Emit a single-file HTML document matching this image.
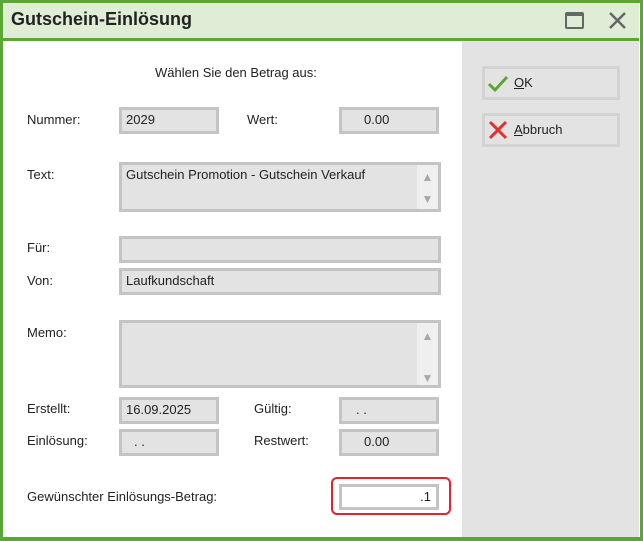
<!DOCTYPE html>
<html><head><meta charset="utf-8"><style>
*{margin:0;padding:0;box-sizing:border-box}
body{width:643px;height:541px;position:relative;overflow:hidden;background:#fff;font-family:"Liberation Sans",sans-serif;font-size:13px;color:#222}
.a{position:absolute}
.f{position:absolute;background:#e3e3e3;border:3px solid #c4c4c4;padding:2px 4px;font-size:13px;line-height:16px}
.l{position:absolute;font-size:13px}
.sb{position:absolute;right:0;top:0;bottom:0;width:21px;background:#efefef;color:#a8a8a8;font-size:12px;text-align:center;line-height:12px}
.btn{position:absolute;left:482px;width:138px;height:34px;border:3px solid #d3d3d3;background:#e3e3e3;font-size:13px}
</style></head><body>
<div class="a" style="left:0;top:0;width:643px;height:541px;border:3px solid #5ba733;border-bottom-width:4px"></div>
<div class="a" style="left:3px;top:3px;width:636px;height:35px;background:#dfedd6"></div>
<div class="a" style="left:3px;top:38px;width:636px;height:3px;background:#5ba733"></div>
<div class="a" style="left:11px;top:9px;font-size:18px;font-weight:bold;color:#222">Gutschein-Einlösung</div>
<div class="a" style="left:565px;top:12px;width:19px;height:17px;border:2px solid #666;border-top-width:4px;border-radius:2px"></div>
<svg class="a" style="left:608px;top:11px" width="19" height="19"><path d="M2 2L17 17M17 2L2 17" stroke="#666" stroke-width="2.5"/></svg>
<div class="a" style="left:462px;top:41px;width:177px;height:496px;background:#e3e3e3"></div>
<div class="btn" style="top:66px"><svg class="a" style="left:2px;top:6px" width="22" height="18"><path d="M2 9L8 15L20 2" stroke="#5aa832" stroke-width="3" fill="none"/></svg><span class="a" style="left:29px;top:6px"><u>O</u>K</span></div>
<div class="btn" style="top:113px"><svg class="a" style="left:3px;top:4px" width="20" height="20"><path d="M2 2L18 18M18 2L2 18" stroke="#e0312e" stroke-width="3"/></svg><span class="a" style="left:29px;top:6px"><u>A</u>bbruch</span></div>

<div class="l" style="left:155px;top:65px">Wählen Sie den Betrag aus:</div>
<div class="l" style="left:27px;top:112px">Nummer:</div>
<div class="f" style="left:119px;top:107px;width:100px;height:27px">2029</div>
<div class="l" style="left:247px;top:112px">Wert:</div>
<div class="f" style="left:339px;top:107px;width:100px;height:27px;padding-left:22px">0.00</div>
<div class="l" style="left:27px;top:167px">Text:</div>
<div class="f" style="left:119px;top:162px;width:322px;height:50px">Gutschein Promotion - Gutschein Verkauf<div class="sb"><div style="margin-top:6px">▲</div><div style="margin-top:10px">▼</div></div></div>
<div class="l" style="left:27px;top:240px">Für:</div>
<div class="f" style="left:119px;top:236px;width:322px;height:27px"></div>
<div class="l" style="left:27px;top:273px">Von:</div>
<div class="f" style="left:119px;top:268px;width:322px;height:27px">Laufkundschaft</div>
<div class="l" style="left:27px;top:325px">Memo:</div>
<div class="f" style="left:119px;top:320px;width:322px;height:68px"><div class="sb"><div style="margin-top:7px">▲</div><div style="margin-top:30px">▼</div></div></div>
<div class="l" style="left:27px;top:401px">Erstellt:</div>
<div class="f" style="left:119px;top:397px;width:100px;height:27px">16.09.2025</div>
<div class="l" style="left:254px;top:401px">Gültig:</div>
<div class="f" style="left:339px;top:397px;width:100px;height:27px;padding-left:14px">. .</div>
<div class="l" style="left:27px;top:433px">Einlösung:</div>
<div class="f" style="left:119px;top:429px;width:100px;height:27px;padding-left:12px">. .</div>
<div class="l" style="left:254px;top:433px">Restwert:</div>
<div class="f" style="left:339px;top:429px;width:100px;height:27px;padding-left:22px">0.00</div>
<div class="l" style="left:27px;top:489px">Gewünschter Einlösungs-Betrag:</div>
<div class="a" style="left:331px;top:477px;width:120px;height:38px;border:2px solid #e0252b;border-radius:6px"></div>
<div class="f" style="left:339px;top:484px;width:100px;height:26px;background:#fff;text-align:right;padding-right:5px">.1</div>
</body></html>
